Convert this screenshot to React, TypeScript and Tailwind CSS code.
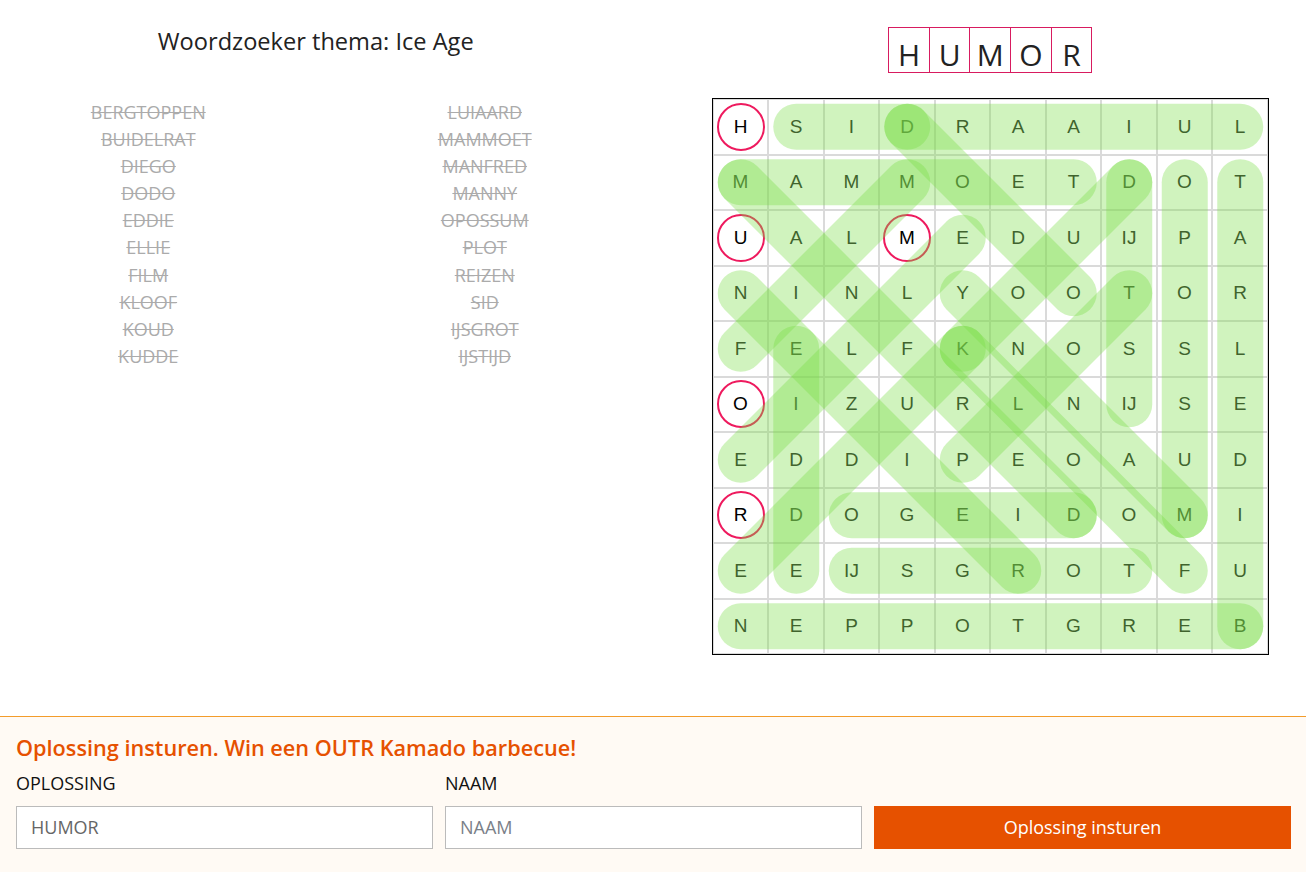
const rows = [
  "H S I D R A A I U L",
  "M A M M O E T D O T",
  "U A L M E D U IJ P A",
  "N I N L Y O O T O R",
  "F E L F K N O S S L",
  "O I Z U R L N IJ S E",
  "E D D I P E O A U D",
  "R D O G E I D O M I",
  "E E IJ S G R O T F U",
  "N E P P O T G R E B",
].map((r) => r.split(" "));

const circled = ["0-0", "2-0", "2-3", "5-0", "7-0"];

// [row, col] start -> end
const found: [number, number, number, number][] = [
  [9, 9, 9, 0], // BERGTOPPEN
  [9, 9, 1, 9], // BUIDELRAT
  [7, 6, 7, 2], // DIEGO
  [0, 3, 3, 6], // DODO
  [8, 1, 4, 1], // EDDIE
  [2, 4, 6, 0], // ELLIE
  [4, 0, 1, 3], // FILM
  [4, 4, 8, 8], // KLOOF
  [4, 4, 1, 7], // KOUD
  [4, 4, 8, 0], // KUDDE
  [0, 9, 0, 3], // LUIAARD
  [1, 0, 1, 6], // MAMMOET
  [1, 0, 7, 6], // MANFRED
  [7, 8, 3, 4], // MANNY
  [1, 8, 7, 8], // OPOSSUM
  [6, 4, 3, 7], // PLOT
  [8, 5, 3, 0], // REIZEN
  [0, 1, 0, 3], // SID
  [8, 2, 8, 7], // IJSGROT
  [5, 7, 1, 7], // IJSTIJD
];

const leftWords = ["BERGTOPPEN", "BUIDELRAT", "DIEGO", "DODO", "EDDIE", "ELLIE", "FILM", "KLOOF", "KOUD", "KUDDE"];
const rightWords = ["LUIAARD", "MAMMOET", "MANFRED", "MANNY", "OPOSSUM", "PLOT", "REIZEN", "SID", "IJSGROT", "IJSTIJD"];

const c = (i: number) => 27.75 + 55.5 * i;

function WordColumn({ words }: { words: string[] }) {
  return (
    <ul className="flex flex-col items-center">
      {words.map((w) => (
        <li key={w} className="text-[18px] leading-[27.1px] text-[#ababab] line-through">
          {w}
        </li>
      ))}
    </ul>
  );
}

function Puzzle() {
  return (
    <div className="relative w-[557px] h-[557px] border border-black bg-white">
      <div className="grid grid-cols-10 grid-rows-10 w-[555px] h-[555px] font-['Liberation_Sans',Arial,sans-serif] text-[19px] text-[#222]">
        {rows.map((row, r) =>
          row.map((ch, col) => {
            const isCircled = circled.includes(`${r}-${col}`);
            return (
              <div key={`${r}-${col}`} className="border border-[#dadada] flex items-center justify-center">
                {isCircled ? (
                  <span className="w-[48px] h-[48px] rounded-full border-[2.3px] border-[#ee1a5e] flex items-center justify-center text-black">
                    {ch}
                  </span>
                ) : (
                  <span>{ch}</span>
                )}
              </div>
            );
          })
        )}
      </div>
      <svg className="absolute left-0 top-0 pointer-events-none" width="555" height="555" viewBox="0 0 555 555">
        {found.map(([r1, c1, r2, c2], i) => (
          <line
            key={i}
            x1={c(c1)}
            y1={c(r1)}
            x2={c(c2)}
            y2={c(r2)}
            stroke="rgb(121,221,69)"
            strokeOpacity={0.35}
            strokeWidth={46}
            strokeLinecap="round"
          />
        ))}
      </svg>
    </div>
  );
}

export default function App() {
  return (
    <div className="w-[1306px] min-h-[872px] bg-white font-['Open_Sans',sans-serif] text-[#222]">
      <div className="grid grid-cols-2 gap-x-[43px] pb-[61px]">
        <div>
          <h1 className="pt-[27px] text-center text-[23.6px] leading-[28px] text-[#222]">Woordzoeker thema: Ice Age</h1>
          <div className="mt-[44px] ml-[-20px] w-[673px] grid grid-cols-2">
            <WordColumn words={leftWords} />
            <WordColumn words={rightWords} />
          </div>
        </div>
        <div className="flex flex-col items-center">
          <div className="mt-[27px] flex border-l border-[#d81b60]">
            {"HUMOR".split("").map((l, i) => (
              <div
                key={i}
                className="w-[40.6px] h-[46px] border-y border-r border-[#d81b60] text-center text-[30px] leading-[30px] pt-[12px] text-[#222]"
              >
                {l}
              </div>
            ))}
          </div>
          <div className="mt-[25px]">
            <Puzzle />
          </div>
        </div>
      </div>

      <div className="border-t border-[#f39c2b] bg-[#fffaf4] pl-4 pr-[15px] pt-[17px] pb-[23px]">
        <h2 className="text-[21.7px] leading-[28px] font-semibold text-[#e65100]">
          Oplossing insturen. Win een OUTR Kamado barbecue!
        </h2>
        <form className="mt-[9px] grid grid-cols-3 gap-x-3" onSubmit={(e) => e.preventDefault()}>
          <div className="flex flex-col">
            <label className="text-[18px] leading-[24px] text-[#111]">OPLOSSING</label>
            <input
              className="mt-[10.5px] h-[43px] border border-[#bbb] bg-white px-[14px] text-[18px] text-[#666] outline-none"
              defaultValue="HUMOR"
            />
          </div>
          <div className="flex flex-col">
            <label className="text-[18px] leading-[24px] text-[#111]">NAAM</label>
            <input
              className="mt-[10.5px] h-[43px] border border-[#bbb] bg-white px-[14px] text-[18px] text-[#333] placeholder:text-[#7a8088] outline-none"
              placeholder="NAAM"
            />
          </div>
          <div className="flex flex-col justify-end">
            <button type="submit" className="h-[43px] bg-[#e65100] text-white text-[18px]">
              Oplossing insturen
            </button>
          </div>
        </form>
      </div>
    </div>
  );
}
